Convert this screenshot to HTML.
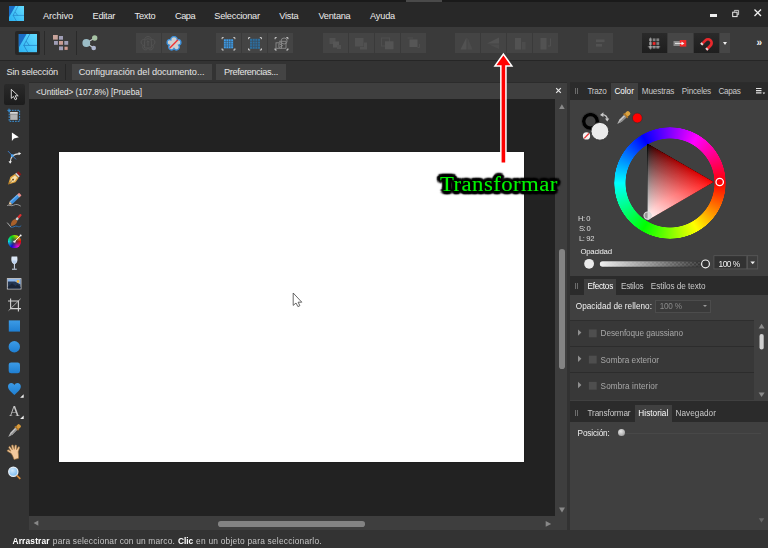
<!DOCTYPE html>
<html lang="es">
<head>
<meta charset="utf-8">
<title>Affinity Designer</title>
<style>
*{box-sizing:border-box;margin:0;padding:0}
html,body{width:768px;height:548px;overflow:hidden;background:#333}
body{position:relative;font-family:"Liberation Sans",sans-serif;font-size:9px;color:#e4e4e4;line-height:1}
.abs,.t{position:absolute}
.t{white-space:nowrap;line-height:12px;height:12px}
#topstrip{left:0;top:0;width:768px;height:2px;background:#1a1a1a}
#topseg{left:406px;top:0;width:36px;height:1.8px;background:#4a4a4a}
#menubar{left:0;top:2px;width:768px;height:24.5px;background:#282828}
#toolbar{left:0;top:26.5px;width:768px;height:34.5px;background:#3a3a3a;border-bottom:1px solid #262626}
#ctxbar{left:0;top:61px;width:768px;height:22px;background:#333}
#lefttools{left:0;top:83px;width:28.7px;height:447px;background:#333}
#doctab{left:29.2px;top:83px;width:538.1px;height:15.7px;background:#3f3f3f}
#canvas{left:28.7px;top:98.7px;width:526.3px;height:417.6px;background:#222}
#page{left:58.5px;top:152.3px;width:465.7px;height:310px;background:#fff;box-shadow:0 0 1.5px #141414}
#vscroll{left:555px;top:98.7px;width:13px;height:417px;background:#3e3e3e}
#hscroll{left:29px;top:516.3px;width:539px;height:13.7px;background:#3e3e3e}
#gap{left:567.3px;top:82px;width:2.7px;height:448px;background:#323232}
#rpanel{left:570px;top:83px;width:198px;height:447px;background:#404040}
#status{left:0;top:530px;width:768px;height:18px;background:#333}
.m{top:10.3px;font-size:9.2px;color:#ececec}
.tb{position:absolute;top:33px;height:20px;background:#444}
.tabrow{position:absolute;left:570px;width:198px;height:17px;background:#2b2b2b}
.tab{position:absolute;top:0;height:17px;background:#404040}
.st{top:534.5px;font-size:8.4px;color:#c6c6c6}
.pt{font-size:8.2px;color:#dcdcdc}
</style>
</head>
<body>
<div id="topstrip" class="abs"></div><div id="topseg" class="abs"></div>
<div id="menubar" class="abs"></div>
<div id="toolbar" class="abs"></div>
<div id="ctxbar" class="abs"></div>
<div class="abs" style="left:29px;top:81.6px;width:739px;height:1.4px;background:#2c2c2c"></div>
<div id="lefttools" class="abs"></div>
<div id="doctab" class="abs"></div>
<div id="canvas" class="abs"></div>
<div id="page" class="abs"></div>
<div id="vscroll" class="abs"></div>
<div id="hscroll" class="abs"></div>
<div id="gap" class="abs"></div>
<div id="rpanel" class="abs"></div>
<div id="status" class="abs"></div>

<!-- MENU -->
<span class="t m" style="left:43px;letter-spacing:-0.09px">Archivo</span>
<span class="t m" style="left:92.5px;letter-spacing:-0.22px">Editar</span>
<span class="t m" style="left:134.5px;letter-spacing:-0.19px">Texto</span>
<span class="t m" style="left:175px;letter-spacing:-0.49px">Capa</span>
<span class="t m" style="left:214.25px;letter-spacing:-0.22px">Seleccionar</span>
<span class="t m" style="left:279.25px;letter-spacing:-0.21px">Vista</span>
<span class="t m" style="left:318.5px;letter-spacing:-0.25px">Ventana</span>
<span class="t m" style="left:370px;letter-spacing:-0.18px">Ayuda</span>

<!-- CONTEXT BAR -->
<span class="t" style="left:6.5px;top:66px;font-size:9.2px;letter-spacing:-0.2px">Sin selección</span>


<!-- WINDOW CONTROLS -->
<div class="abs" style="left:710px;top:14.3px;width:7.2px;height:2.3px;background:#eee"></div>
<svg class="abs" style="left:730px;top:8px" width="12" height="12" viewBox="0 0 12 12"><path d="M4.4 3.6V2.4H8.6V6.6H7.4" fill="none" stroke="#d8d8d8" stroke-width="0.9"/><rect x="2.7" y="4.2" width="4.4" height="4.4" fill="none" stroke="#eee" stroke-width="1"/></svg>
<svg class="abs" style="left:752px;top:7px" width="12" height="12" viewBox="0 0 12 12"><path d="M2.5 2.5L9 9M9 2.5L2.5 9" stroke="#f0f0f0" stroke-width="1.3" fill="none"/></svg>

<!-- TOOLBAR BUTTONS -->
<div class="abs" style="left:15px;top:31px;width:25px;height:24px;background:#262626;border-radius:2px"></div>
<div class="abs" style="left:44px;top:31px;width:1px;height:24px;background:#2a2a2a"></div>
<div class="abs" style="left:76px;top:31px;width:1px;height:24px;background:#2a2a2a"></div>
<div class="tb" style="left:135.5px;width:25px"></div><div class="tb" style="left:161.5px;width:25px"></div>
<div class="tb" style="left:215.5px;width:25px"></div><div class="tb" style="left:241.5px;width:25px"></div><div class="tb" style="left:267.5px;width:25px"></div>
<div class="tb" style="left:322.5px;width:25px"></div><div class="tb" style="left:348.5px;width:25px"></div><div class="tb" style="left:374.5px;width:25px"></div><div class="tb" style="left:400.5px;width:25px"></div>
<div class="tb" style="left:454.5px;width:25px"></div><div class="tb" style="left:480.5px;width:25px"></div><div class="tb" style="left:506.5px;width:25px"></div><div class="tb" style="left:532.5px;width:25px"></div>
<div class="tb" style="left:587.5px;width:25px"></div>
<div class="tb" style="left:641.5px;width:25px;background:linear-gradient(#2a2a2a,#1e1e1e)"></div>
<div class="tb" style="left:667.5px;width:25px;background:#464646"></div>
<div class="tb" style="left:693.5px;width:25px;background:linear-gradient(#2a2a2a,#1e1e1e)"></div>
<div class="tb" style="left:720px;width:10px;background:#464646"></div>
<div class="abs" style="left:722.5px;top:41.5px;width:0;height:0;border-left:2.5px solid transparent;border-right:2.5px solid transparent;border-top:3px solid #eee"></div>
<span class="t" style="left:756.4px;top:36.6px;font-size:10px;color:#f4f4f4;font-weight:bold;letter-spacing:-0.3px">»</span>


<!-- TOOLBAR ICONS -->
<svg class="abs" style="left:0;top:0" width="768" height="62" viewBox="0 0 768 62">
<defs>
<linearGradient id="lg" x1="1" y1="0" x2="0" y2="1"><stop offset="0" stop-color="#62dbff"/><stop offset="1" stop-color="#2bb2f2"/></linearGradient>
<g id="logo"><rect width="15" height="15" fill="url(#lg)"/><path d="M0 0H6.4L0 11.2Z" fill="#1a6dc6"/><path d="M9.1 0L4.1 9.4L7.4 15M4.1 9.4H15M6.2 6L8.6 9.4" fill="none" stroke="#1767b3" stroke-width="0.55" opacity="0.85"/></g>
<g id="corners" fill="none" stroke="#e0e0e0" stroke-width="0.9"><path d="M-6.4 -4.6V-6.2H-4.8M4.8 -6.2H6.4V-4.6M6.4 4.6V6.2H4.8M-4.8 6.2H-6.4V4.6"/></g>
</defs>
<use href="#logo" x="9" y="6"/>
<g transform="translate(18.8,34) scale(1.213)"><use href="#logo"/></g>
<!-- pixel persona -->
<g>
<rect x="53" y="35" width="4.8" height="4.6" fill="#c9a49b"/><rect x="59" y="36" width="4" height="3.7" fill="#a09eb6"/>
<rect x="54" y="41" width="3.9" height="3.8" fill="#a09eb6"/><rect x="59" y="41" width="4" height="3.8" fill="#c99c94"/><rect x="64.3" y="41" width="3.9" height="3.8" fill="#a09eb6"/>
<rect x="59" y="46.4" width="4" height="3.8" fill="#a09eb6"/><rect x="64.5" y="46.7" width="3.2" height="3.2" fill="#d09a90"/>
</g>
<!-- share -->
<g><path d="M94.7 38L86.3 43L93.7 48" fill="none" stroke="#c4c8cc" stroke-width="1.1"/><circle cx="86.3" cy="43" r="3.9" fill="#9bbcc6"/><circle cx="94.7" cy="38" r="2.7" fill="#a7c3a4"/><circle cx="93.7" cy="48" r="2.3" fill="#aeb6d0"/></g>
<!-- flower disabled -->
<g transform="translate(148,43.4)" fill="none" stroke="#555" stroke-width="0.9">
<path id="fl" d="M0 -6.8C2.2 -6.8 3.4 -5.2 3.2 -3.6C4.9 -4.3 6.6 -3.4 6.9 -1.6C7.2 0.3 5.8 1.5 4.6 1.8C5.8 3.3 5.4 5.2 3.9 6.1C2.4 7 0.8 6.2 0 5C-0.8 6.2 -2.4 7 -3.9 6.1C-5.4 5.2 -5.8 3.3 -4.6 1.8C-5.8 1.5 -7.2 0.3 -6.9 -1.6C-6.6 -3.4 -4.9 -4.3 -3.2 -3.6C-3.4 -5.2 -2.2 -6.8 0 -6.8Z"/>
<path d="M-3.4 4.6V-1.5C-3.4 -3.5 -1.8 -4.6 0 -4.6C1.8 -4.6 3.4 -3.5 3.4 -1.5V4.6ZM0 2.5V-2.5M-1.4 -1.2L0 -2.6L1.4 -1.2"/>
</g>
<!-- flower active -->
<g transform="translate(174,43.4)"><use href="#fl" fill="#cfcfcf" stroke="#3a90dc" stroke-width="1.3"/><path d="M-4.2 4.6L4 -3.6" stroke="#f03030" stroke-width="1.3"/></g>
<!-- selection grids -->
<g transform="translate(228.5,43.8)"><rect x="-4.6" y="-4.5" width="9.2" height="9" fill="#3f9fec"/><path d="M-2.3 -4.5V4.5M0 -4.5V4.5M2.3 -4.5V4.5M-4.6 -2.2H4.6M-4.6 0H4.6M-4.6 2.2H4.6" stroke="#3a4a5a" stroke-width="0.7" opacity="0.8"/><use href="#corners"/></g>
<g transform="translate(255,43.8)"><rect x="-5" y="-5" width="10" height="10" fill="#2d6f9f"/><path d="M-2.5 -5V5M0 -5V5M2.5 -5V5M-5 -2.5H5M-5 0H5M-5 2.5H5" stroke="#3b4a58" stroke-width="0.8" opacity="0.8"/><use href="#corners"/></g>
<g transform="translate(281.5,43.8)"><g fill="none" stroke="#8a8a8a" stroke-width="0.9"><rect x="-5.5" y="-1" width="5.5" height="5.5"/><circle cx="2.6" cy="-2.8" r="3"/><path d="M-2.5 -2.5H4.5V4.5H-1M-2.6 -0.2L1.2 1.8L-2.6 3.8Z"/></g><use href="#corners"/></g>
<!-- boolean disabled -->
<g fill="#515151"><rect x="329.5" y="38" width="6" height="6"/><rect x="333" y="41.5" width="6" height="6" fill="#565656"/><rect x="337" y="45" width="4" height="4"/>
<rect x="355" y="38" width="8.5" height="8.5"/><path d="M364 42.5H367V49.5H360V47H364Z"/>
<rect x="381.5" y="38" width="8" height="8" fill="none" stroke="#4e4e4e"/><rect x="385" y="41.3" width="8.5" height="8" fill="#545454"/>
<rect x="409.5" y="39.5" width="8" height="7.5" fill="#565656"/><path d="M407.5 38H413M417.5 47.5H419.5V44" stroke="#4e4e4e" fill="none"/></g>
<!-- flips disabled -->
<g fill="#525252"><path d="M466.5 37.5V49.5H460.5Z"/><path d="M467.5 37.5V49.5H472.5Z" fill="#4c4c4c"/>
<path d="M499 37.5L487 43.5H499Z"/><path d="M499 44.5L489 44.5L499 49Z" fill="#4c4c4c"/>
<rect x="515" y="38" width="6" height="11.5"/><rect x="522" y="42" width="3.5" height="7.5" fill="#4c4c4c"/>
<rect x="540.5" y="38" width="6" height="11.5"/><path d="M550.5 38.5V46H548" stroke="#505050" fill="none"/>
<rect x="596" y="39.5" width="8.5" height="2.6"/><rect x="596" y="44" width="6" height="2.6"/></g>
<!-- snapping grid -->
<g fill="#808080"><rect x="649" y="38.4" width="2.8" height="2.8"/><rect x="652.7" y="38.4" width="2.8" height="2.8"/><rect x="656.4" y="38.4" width="2.8" height="2.8"/>
<rect x="649" y="42.1" width="2.8" height="2.8"/><rect x="652.7" y="42.1" width="2.8" height="2.8" fill="#f02828"/><rect x="656.4" y="42.1" width="2.8" height="2.8"/>
<rect x="649" y="45.8" width="2.8" height="2.8"/><rect x="652.7" y="45.8" width="2.8" height="2.8"/><rect x="656.4" y="45.8" width="2.8" height="2.8"/>
<path d="M650.6 37.5V49.5M647.8 46.8H660.2" stroke="#bdbdbd" stroke-width="0.6" fill="none"/></g>
<!-- force pixel alignment -->
<g><rect x="673.5" y="41" width="6.5" height="5" fill="#8a8a8a"/><rect x="679.8" y="40" width="6.5" height="6.6" fill="#f02828"/><path d="M675 43.4H682" stroke="#f2f2f2" stroke-width="0.9"/><path d="M681.5 41.5L684.4 43.4L681.5 45.3Z" fill="#f4f4f4"/></g>
<!-- magnet -->
<g transform="translate(707.3,43.6) rotate(45)"><path d="M-3.6 5V-1A3.6 3.6 0 0 1 3.6 -1V5" fill="none" stroke="#e8282c" stroke-width="2.7"/><path d="M-3.6 5V3.2M3.6 5V3.2" stroke="#dcdcdc" stroke-width="2.7"/></g>
</svg>

<!-- CONTEXT BAR BUTTONS -->
<div class="abs" style="left:65px;top:64px;width:1px;height:16px;background:#262626"></div>
<div class="abs" style="left:71.5px;top:64px;width:140.5px;height:15.5px;background:#444"></div>
<div class="abs" style="left:216px;top:64px;width:70px;height:15.5px;background:#444"></div>
<span class="t" style="left:78.75px;top:66px;font-size:9.2px;letter-spacing:-0.05px">Configuración del documento...</span>
<span class="t" style="left:224px;top:66px;font-size:9.2px;letter-spacing:-0.36px">Preferencias...</span>

<!-- DOC TAB -->
<span class="t" style="left:36px;top:87px;font-size:8.2px;color:#e8e8e8">&lt;Untitled&gt; (107.8%) [Prueba]</span>
<svg class="abs" style="left:554px;top:86.2px" width="9" height="9" viewBox="0 0 9 9"><path d="M2.2 2.2L6.8 6.8M6.8 2.2L2.2 6.8" stroke="#e8e8e8" stroke-width="1.2" fill="none"/></svg>


<!-- LEFT TOOLS -->
<div class="abs" style="left:4px;top:84px;width:21px;height:20.5px;background:linear-gradient(#2a2a2a,#1c1c1c);border-radius:2px"></div>
<div class="abs" style="left:8.2px;top:235.4px;width:12.6px;height:12.6px;border-radius:50%;background:radial-gradient(circle,#3a3a3a 0,rgba(60,60,60,0.7) 25%,rgba(60,60,60,0) 75%),conic-gradient(from 90deg,#f00,#f0f,#00f,#0ff,#0f0,#ff0,#f00)"></div>
<svg class="abs" style="left:0;top:83px" width="29" height="447" viewBox="0 83 29 447">
<defs>
<radialGradient id="lens" cx="0.4" cy="0.35" r="0.7"><stop offset="0" stop-color="#d4eafc"/><stop offset="1" stop-color="#74b8f0"/></radialGradient>
<linearGradient id="bl" x1="0" y1="0" x2="0" y2="1"><stop offset="0" stop-color="#3c9be6"/><stop offset="1" stop-color="#1f7fd2"/></linearGradient>
</defs>
<!-- pointer -->
<path d="M11.3 89.3V98.4L13.5 96.4L15.2 99.8L16.8 99L15.2 95.8H18.2Z" fill="#1c1c1c" stroke="#e6e6e6" stroke-width="0.9" stroke-linejoin="round"/>
<!-- artboard -->
<rect x="9.2" y="110.3" width="10.4" height="11" fill="none" stroke="#3a96e0" stroke-width="1" stroke-dasharray="1.7 1"/>
<rect x="10.2" y="112.1" width="7.4" height="7.8" fill="#b4b4b4"/><rect x="10.2" y="112.1" width="7.4" height="1.7" fill="#dedede"/><rect x="10.2" y="113.8" width="7.4" height="0.6" fill="#777"/>
<path d="M9 108.6V112M7.3 110.3H10.7" stroke="#3a96e0" stroke-width="0.9"/>
<!-- node -->
<path d="M11.9 132.6V140.9L14 138.6L18.9 137.2Z" fill="#fff"/>
<!-- corner -->
<path d="M10.2 162.6C10.2 157.6 12.8 153.8 19.6 153.6" fill="none" stroke="#dcdcdc" stroke-width="1.1"/><path d="M18.6 151.9L21.2 153.6L18.6 155.3Z M8.5 161.2L10.2 163.8L11.9 161.2Z" fill="#ececec"/><path d="M7.9 151L16 159.4" stroke="#3a7fd0" stroke-width="0.9"/><rect x="10.9" y="154.3" width="2.6" height="2.6" fill="#4aa0ec"/>
<!-- pen -->
<g transform="translate(14.2,178.4) rotate(45)"><path d="M-2.2 -8H2.2V-5.2H-2.2Z" fill="#8a1a1a"/><path d="M-2.5 -5.4H2.5V-3.6H-2.5Z" fill="#cfcfcf"/><path d="M-2.7 -3.6H2.7L3.7 1.8L0 8.6L-3.7 1.8Z" fill="#e2a43c"/><path d="M-1.5 -2.6H1.5L2.3 1.6L0 6L-2.3 1.6Z" fill="#f6e2b0"/><path d="M0 8.4V2.4" stroke="#6a4210" stroke-width="0.7"/><circle cx="0" cy="1.6" r="0.9" fill="#6a4210"/></g>
<!-- pencil -->
<g transform="translate(14.5,199.5) rotate(47)"><rect x="-1.8" y="-8" width="3.6" height="2.2" rx="0.6" fill="#ec8c8c"/><rect x="-1.8" y="-5.8" width="3.6" height="1.1" fill="#d4d4d4"/><rect x="-1.8" y="-4.7" width="3.6" height="9.6" fill="#3a8fe0"/><rect x="-1.8" y="-4.7" width="1.2" height="9.6" fill="#6ab0f0"/><path d="M-1.8 4.9H1.8L0 8.2Z" fill="#e8c9a0"/><path d="M-0.7 7H0.7L0 8.4Z" fill="#333"/></g>
<path d="M7.2 205.6C9.5 204.2 11 206.8 13.6 205.2C16 203.8 18.2 204.4 20.8 206.2" fill="none" stroke="#b0b0b0" stroke-width="0.8"/>
<!-- brush -->
<g transform="translate(15.2,221) rotate(42)"><rect x="-1.1" y="-9" width="2.2" height="5" rx="1" fill="#e03030"/><rect x="-1.2" y="-4.2" width="2.4" height="2.8" fill="#cfcfcf"/><path d="M-1.6 -1.4H1.6C3 1 2.8 4 0 6.6C-2.8 4 -3 1 -1.6 -1.4Z" fill="#a8602a"/></g>
<path d="M7.2 222.6L11 227.2" stroke="#c8c8c8" stroke-width="0.8"/><path d="M10.6 227C13 228.4 15 225 17.5 226.4C19 227.2 20 226.8 21.2 225.6" fill="none" stroke="#2f6fb0" stroke-width="1"/>
<!-- fill tool colour wheel -->
<path d="M14.6 241.5L20.4 235.7" stroke="#f4f4f4" stroke-width="1"/><circle cx="14.5" cy="241.6" r="1.2" fill="#f0f0f0"/><circle cx="20.6" cy="235.6" r="1" fill="#fff"/>
<!-- transparency glass -->
<path d="M11.6 256.6H17.2C17.8 260 17.6 263.2 14.4 264.2C11.2 263.2 11 260 11.6 256.6Z" fill="#dbe7f6"/><path d="M12.2 260.5H16.8C16.6 262.4 15.8 263.4 14.4 263.8C13 263.4 12.4 262.4 12.2 260.5Z" fill="#b9cfec"/><path d="M14.4 264V268.8M12 269.2H16.8" stroke="#cfdcf0" stroke-width="1"/>
<!-- image -->
<rect x="7.3" y="278.6" width="13.7" height="10.4" fill="#253752" stroke="#dcdcdc" stroke-width="0.8"/><path d="M7.8 281.5H15L20.5 284.6V279H7.8Z" fill="#8fb6e8"/><path d="M7.8 287L12 283.2L15.5 286L17.5 284.6L20.6 287V288.6H7.8Z" fill="#1b2536"/><circle cx="18" cy="281.4" r="1.3" fill="#f2b33a"/>
<!-- crop -->
<path d="M10.6 298.4V308.6H21M8 301H18.4V311.4" fill="none" stroke="#d2d2d2" stroke-width="1.1"/><path d="M8.6 310.6L20.6 298.8" stroke="#c4c4c4" stroke-width="0.8"/>
<!-- shapes -->
<rect x="8.8" y="320.4" width="11.2" height="11.2" fill="url(#bl)"/>
<circle cx="14.3" cy="346.7" r="5.7" fill="url(#bl)"/>
<rect x="8.7" y="362.4" width="11.3" height="10.9" rx="2.4" fill="url(#bl)"/>
<path d="M14.4 394.9C10.5 391.5 8 389.4 8 386.5C8 384.5 9.5 383 11.3 383C12.6 383 13.8 383.8 14.4 385C15 383.8 16.2 383 17.5 383C19.3 383 20.8 384.5 20.8 386.5C20.8 389.4 18.3 391.5 14.4 394.9Z" fill="url(#bl)"/>
<path d="M23.7 394.2V397.8H20.1Z M23.7 415.5V419.1H20.1Z" fill="#f0f0f0"/>
<!-- dropper -->
<g transform="translate(14.4,430.6) rotate(45)"><rect x="-2" y="-8" width="4" height="4.2" rx="1.2" fill="#d89a3a"/><rect x="-2.6" y="-4" width="5.2" height="1.5" fill="#b87a28"/><path d="M-1.4 -2.5H1.4V4L0 8.6L-1.4 4Z" fill="#c8c8c8"/><path d="M0 -2.5H1.4V4L0 8.6Z" fill="#909090"/></g>
<!-- hand -->
<g transform="rotate(-14 14.4 452.6)"><path d="M11 452.5L8.2 449.8C7.4 448.9 8.6 447.9 9.5 448.7L11.4 450.4L10.2 446.6C9.9 445.5 11.4 445 11.8 446.1L13.1 449.4L13.3 445.4C13.4 444.3 15 444.4 15 445.5L15.1 449.4L16.6 446C17.1 445 18.5 445.6 18.1 446.7L17.1 450.4L19.3 448.2C20.1 447.4 21.1 448.4 20.4 449.3L18.2 452.8C17.8 455.6 17.6 457.2 17 459.2H12.4C12.2 456.6 11.9 454.4 11 452.5Z" fill="#f2c89c" stroke="#a87840" stroke-width="0.55"/></g>
<!-- zoom -->
<circle cx="13.3" cy="471.7" r="4.6" fill="url(#lens)" stroke="#e8f0f8" stroke-width="1.3"/><path d="M16.8 475.3L20.3 478.9" stroke="#d88a3a" stroke-width="1.7"/>
</svg>
<span class="t" style="left:9px;top:402px;font-family:'Liberation Serif',serif;font-size:15px;line-height:18px;height:18px;color:#c6c6c6;will-change:transform">A</span>


<!-- SCROLLBARS -->
<div class="abs" style="left:559px;top:248.6px;width:5.6px;height:120.4px;background:#838383;border-radius:2.8px"></div>
<div class="abs" style="left:217.6px;top:521px;width:147.2px;height:5.6px;background:#838383;border-radius:2.8px"></div>
<svg class="abs" style="left:0;top:0;pointer-events:none" width="768" height="548" viewBox="0 0 768 548">
<path d="M559.1 108.9L561.9 104.2L564.7 108.9Z" fill="#888"/>
<path d="M559 507.6L562 512.6L565 507.6Z" fill="#888"/>
<path d="M38.3 520.4L33.6 523.1L38.3 525.8Z" fill="#888"/>
<path d="M545.7 521L551.2 523.9L545.7 526.8Z" fill="#888"/>
<path d="M758.8 518.2L761.5 522.6L764.2 518.2Z" fill="#666"/>
</svg>

<!-- RIGHT PANEL: COLOR -->
<div class="tabrow" style="top:83px"><div class="tab" style="left:40.5px;width:27px"></div></div>
<span class="t pt" style="left:587.5px;top:85.5px;color:#c9c9c9;letter-spacing:-0.36px">Trazo</span>
<span class="t pt" style="left:614.4px;top:85.5px;color:#fff;letter-spacing:-0.02px">Color</span>
<span class="t pt" style="left:641.7px;top:85.5px;color:#c9c9c9;letter-spacing:-0.13px">Muestras</span>
<span class="t pt" style="left:681.8px;top:85.5px;color:#c9c9c9;letter-spacing:-0.22px">Pinceles</span>
<span class="t pt" style="left:718.5px;top:85.5px;color:#c9c9c9;letter-spacing:-0.35px">Capas</span>
<svg class="abs" style="left:755px;top:87px" width="12" height="9" viewBox="0 0 12 9"><path d="M1 1.5H6.5M1 3.7H6.5M1 5.9H6.5" stroke="#e4e4e4" stroke-width="1.2"/><path d="M7.6 5.4H10.2L8.9 7.2Z" fill="#e4e4e4"/></svg>

<div class="abs" style="left:613.6px;top:126.8px;width:112px;height:112px;border-radius:50%;background:conic-gradient(from 90deg,#f00,#ff0,#0f0,#0ff,#00f,#f0f,#f00);-webkit-mask:radial-gradient(circle,transparent 44.2px,#000 44.8px,#000 55.4px,transparent 56px);mask:radial-gradient(circle,transparent 44.2px,#000 44.8px,#000 55.4px,transparent 56px)"></div>
<svg class="abs" style="left:570px;top:100px" width="198" height="180" viewBox="570 100 198 180">
<defs>
<linearGradient id="tw" gradientUnits="userSpaceOnUse" x1="647.5" y1="220.2" x2="680.6" y2="162.9"><stop offset="0" stop-color="rgb(255,255,255)"/><stop offset="0.1" stop-color="rgb(228,228,228)"/><stop offset="0.25" stop-color="rgb(187,187,187)"/><stop offset="0.5" stop-color="rgb(121,121,121)"/><stop offset="0.75" stop-color="rgb(57,57,57)"/><stop offset="1" stop-color="rgb(0,0,0)"/></linearGradient>
<linearGradient id="tr" gradientUnits="userSpaceOnUse" x1="647.5" y1="182" x2="713.7" y2="182"><stop offset="0" stop-color="rgb(0,0,0)"/><stop offset="0.05" stop-color="rgb(36,0,0)"/><stop offset="0.1" stop-color="rgb(57,0,0)"/><stop offset="0.2" stop-color="rgb(90,0,0)"/><stop offset="0.3" stop-color="rgb(117,0,0)"/><stop offset="0.45" stop-color="rgb(152,0,0)"/><stop offset="0.6" stop-color="rgb(183,0,0)"/><stop offset="0.8" stop-color="rgb(221,0,0)"/><stop offset="1" stop-color="rgb(255,0,0)"/></linearGradient>
<filter id="gam" x="-5%" y="-5%" width="110%" height="110%" color-interpolation-filters="sRGB"><feComponentTransfer><feFuncR type="gamma" exponent="0.82"/><feFuncG type="gamma" exponent="0.82"/><feFuncB type="gamma" exponent="0.82"/></feComponentTransfer></filter>
<linearGradient id="op" x1="0" y1="0" x2="1" y2="0"><stop offset="0" stop-color="#f0f0f0"/><stop offset="0.5" stop-color="#e0e0e0" stop-opacity="0.55"/><stop offset="1" stop-color="#ddd" stop-opacity="0"/></linearGradient>
<pattern id="chk" width="4" height="4" patternUnits="userSpaceOnUse" x="600" y="261.5"><rect width="4" height="4" fill="#484848"/><rect width="2" height="2" fill="#2c2c2c"/><rect x="2" y="2" width="2" height="2" fill="#2c2c2c"/></pattern>
</defs>
<!-- stroke/fill selector -->
<circle cx="590.5" cy="121.3" r="6.85" fill="none" stroke="#000" stroke-width="3.5"/>
<circle cx="590.5" cy="121.3" r="9" fill="none" stroke="#343434" stroke-width="0.8"/>
<circle cx="599.9" cy="131.3" r="8.9" fill="#ebebeb" stroke="#353535" stroke-width="0.9"/>
<circle cx="586.5" cy="135.9" r="3.65" fill="#f4f4f4"/><path d="M584.2 138.4L588.9 133.5" stroke="#ee3030" stroke-width="1.3"/>
<path d="M602 114.6C605.4 114.4 607.4 116.8 607.2 119.4" fill="none" stroke="#cacaca" stroke-width="1.3"/><path d="M600 114.9L603.4 112.2V117Z M607.2 121.6L605 118.4H609.3Z" fill="#cacaca"/>
<g transform="translate(623.4,117.9) rotate(46) scale(1.08)"><rect x="-2.1" y="-7.8" width="4.2" height="4.4" rx="1.5" fill="#dba23e"/><rect x="-2.7" y="-3.8" width="5.4" height="1.6" rx="0.5" fill="#b87c28"/><path d="M-1.5 -2.2H1.5V3.6L0 7.8L-1.5 3.6Z" fill="#c8c8c8"/><path d="M0 -2.2H1.5V3.6L0 7.8Z" fill="#8a8a8a"/></g>
<circle cx="637.3" cy="118" r="4.9" fill="#f00" stroke="#2e2e2e" stroke-width="0.6"/>
<!-- wheel -->
<g style="isolation:isolate" filter="url(#gam)"><path d="M713.7 182L647.5 143.8V220.2Z" fill="url(#tr)"/><path d="M713.7 182L647.5 143.8V220.2Z" fill="url(#tw)" style="mix-blend-mode:plus-lighter"/></g>
<circle cx="719.7" cy="182" r="3.7" fill="none" stroke="#fff" stroke-width="1.3"/>
<circle cx="647.6" cy="215.6" r="3.6" fill="#d0d0d0" fill-opacity="0.6" stroke="#d8d8d8" stroke-width="1.2"/>
<!-- opacity -->
<circle cx="589.1" cy="263.8" r="4.9" fill="#ebebeb"/>
<rect x="599.8" y="261.3" width="103" height="5.4" rx="2.7" fill="url(#chk)" stroke="#2a2a2a" stroke-width="0.6"/>
<rect x="599.8" y="261.3" width="103" height="5.4" rx="2.7" fill="url(#op)"/>
<circle cx="705.5" cy="263.9" r="3.9" fill="#303030" stroke="#f2f2f2" stroke-width="1.2"/>
<rect x="713.9" y="255.7" width="33" height="13.2" fill="#323232" stroke="#5a5a5a" stroke-width="0.8"/>
<rect x="747.3" y="255.7" width="10.4" height="13.2" fill="#3c3c3c" stroke="#5a5a5a" stroke-width="0.8"/>
<path d="M750.4 261.6H755L752.7 264.3Z" fill="#eee"/>
</svg>
<span class="t pt" style="left:577.9px;top:213.1px;font-size:7.6px;letter-spacing:-0.43px">H: 0</span>
<span class="t pt" style="left:579px;top:223px;font-size:7.6px;letter-spacing:-0.6px">S: 0</span>
<span class="t pt" style="left:579px;top:233px;font-size:7.6px;letter-spacing:-0.38px">L: 92</span>
<span class="t pt" style="left:580.5px;top:245.6px;font-size:7.8px;color:#f0f0f0;letter-spacing:-0.27px">Opacidad</span>
<span class="t pt" style="left:718.5px;top:257.8px;font-size:8.4px;color:#f2f2f2;letter-spacing:-0.5px">100 %</span>

<!-- RIGHT PANEL: EFFECTS -->
<div class="tabrow" style="top:278px"><div class="tab" style="left:13.5px;width:32.5px"></div></div>
<span class="t pt" style="left:587.5px;top:281px;color:#fff;letter-spacing:-0.26px">Efectos</span>
<span class="t pt" style="left:620.9px;top:281px;color:#c9c9c9;letter-spacing:-0.22px">Estilos</span>
<span class="t pt" style="left:650.8px;top:281px;color:#c9c9c9;letter-spacing:-0.05px">Estilos de texto</span>
<span class="t pt" style="left:575.8px;top:301px;color:#f0f0f0;letter-spacing:0.03px">Opacidad de relleno:</span>
<div class="abs" style="left:654.5px;top:299.5px;width:56px;height:13px;background:#3a3a3a;border:1px solid #4c4c4c"></div>
<span class="t pt" style="left:659.7px;top:301px;color:#8a8a8a;letter-spacing:-0.22px">100 %</span>
<div class="abs" style="left:703px;top:304.5px;width:0;height:0;border-left:2px solid transparent;border-right:2px solid transparent;border-top:2.5px solid #999"></div>
<div class="abs" style="left:570px;top:319.5px;width:184px;height:80px;background:#383838;border-top:1px solid #2e2e2e"></div>
<div class="abs" style="left:570px;top:346px;width:184px;height:1px;background:#2c2c2c"></div>
<div class="abs" style="left:570px;top:372px;width:184px;height:1px;background:#2c2c2c"></div>
<div class="abs" style="left:570px;top:401px;width:198px;height:4px;background:#2b2b2b"></div>
<div class="abs" style="left:570px;top:275.5px;width:198px;height:3px;background:#2b2b2b"></div>
<svg class="abs" style="left:570px;top:319px" width="198" height="82" viewBox="570 319 198 82">
<g fill="#909090"><path d="M578 329.4V335.8L581.4 332.6Z"/><path d="M578 355.6V362L581.4 358.8Z"/><path d="M578 381.8V388.2L581.4 385Z"/></g>
<g fill="#4e4e4e"><rect x="588.9" y="329.5" width="7.8" height="7.8"/><rect x="588.9" y="355.7" width="7.8" height="7.8"/><rect x="588.9" y="381.9" width="7.8" height="7.8"/></g>
<path d="M758.6 328.4L761.6 323.8L764.6 328.4Z" fill="#8a8a8a"/>
<path d="M758.6 392.4L761.6 397L764.6 392.4Z" fill="#8a8a8a"/>
<rect x="759.5" y="334" width="4.2" height="15.5" rx="2.1" fill="#d0d0d0"/>
</svg>
<span class="t pt" style="left:600.6px;top:327.5px;color:#a8a8a8;letter-spacing:-0.07px">Desenfoque gaussiano</span>
<span class="t pt" style="left:600.6px;top:355px;color:#a8a8a8;letter-spacing:0.01px">Sombra exterior</span>
<span class="t pt" style="left:600.6px;top:381px;color:#a8a8a8;letter-spacing:0.08px">Sombra interior</span>

<!-- RIGHT PANEL: HISTORY -->
<div class="tabrow" style="top:405px"><div class="tab" style="left:65px;width:37px"></div></div>
<span class="t pt" style="left:587.5px;top:408px;color:#c9c9c9;letter-spacing:-0.12px">Transformar</span>
<span class="t pt" style="left:638.3px;top:408px;color:#fff;letter-spacing:0.05px">Historial</span>
<span class="t pt" style="left:675.5px;top:408px;color:#c9c9c9;letter-spacing:0.05px">Navegador</span>
<span class="t pt" style="left:577.6px;top:428px;color:#f0f0f0;letter-spacing:-0.13px">Posición:</span>
<div class="abs" style="left:621px;top:432.5px;width:140px;height:1px;background:#484848"></div>
<div class="abs" style="left:617.5px;top:429.3px;width:7px;height:7px;border-radius:50%;background:radial-gradient(circle at 40% 35%,#e8e8e8,#8c8c8c)"></div>


<!-- GRIPS -->
<div class="abs" style="left:575px;top:88.1px;width:0.9px;height:5.6px;background:#6c6c6c"></div><div class="abs" style="left:577.2px;top:88.1px;width:0.9px;height:5.6px;background:#6c6c6c"></div><div class="abs" style="left:575px;top:283.3px;width:0.9px;height:5.6px;background:#6c6c6c"></div><div class="abs" style="left:577.2px;top:283.3px;width:0.9px;height:5.6px;background:#6c6c6c"></div><div class="abs" style="left:575px;top:410.2px;width:0.9px;height:5.6px;background:#6c6c6c"></div><div class="abs" style="left:577.2px;top:410.2px;width:0.9px;height:5.6px;background:#6c6c6c"></div>
<!-- ANNOTATION -->
<svg class="abs" style="left:0;top:0;pointer-events:none" width="768" height="548" viewBox="0 0 768 548">
<path d="M503.4 55.4L510.4 65.2H505.2V162.6H501.6V65.2H496.4Z" fill="#f00" stroke="#fff" stroke-width="3" stroke-linejoin="miter" stroke-miterlimit="6" paint-order="stroke"/>

<path d="M293.2 293V305.4L296 303L297.9 306.6L299.9 305.7L298.1 302.2H301.8Z" fill="#fff" stroke="#444" stroke-width="0.8" stroke-linejoin="round"/>
</svg>
<span class="t" id="anno" style="left:440px;top:170px;height:28px;line-height:28px;font-family:'Liberation Serif',serif;font-size:20.5px;color:#00f400;transform-origin:0 50%;transform:scaleX(1.11);letter-spacing:0.4px;text-shadow:1.5px 0.0px 1px #000,1.3px 0.7px 1px #000,0.8px 1.3px 1px #000,0.0px 1.5px 1px #000,-0.7px 1.3px 1px #000,-1.3px 0.7px 1px #000,-1.5px 0.0px 1px #000,-1.3px -0.7px 1px #000,-0.8px -1.3px 1px #000,-0.0px -1.5px 1px #000,0.8px -1.3px 1px #000,1.3px -0.8px 1px #000,2.5px 0.0px 1.2px #000,2.2px 1.2px 1.2px #000,1.3px 2.2px 1.2px #000,0.0px 2.5px 1.2px #000,-1.2px 2.2px 1.2px #000,-2.2px 1.2px 1.2px #000,-2.5px 0.0px 1.2px #000,-2.2px -1.2px 1.2px #000,-1.3px -2.2px 1.2px #000,-0.0px -2.5px 1.2px #000,1.3px -2.2px 1.2px #000,2.2px -1.3px 1.2px #000,3.0px 0.0px 1.5px #000,2.6px 1.5px 1.5px #000,1.5px 2.6px 1.5px #000,0.0px 3.0px 1.5px #000,-1.5px 2.6px 1.5px #000,-2.6px 1.5px 1.5px #000,-3.0px 0.0px 1.5px #000,-2.6px -1.5px 1.5px #000,-1.5px -2.6px 1.5px #000,-0.0px -3.0px 1.5px #000,1.5px -2.6px 1.5px #000,2.6px -1.5px 1.5px #000;-webkit-text-stroke:0.12px #00f400">Transformar</span>

<!-- STATUS -->
<span class="t st" style="left:12.5px;font-weight:bold;color:#fff;letter-spacing:0.15px">Arrastrar</span>
<span class="t st" style="left:52.8px;letter-spacing:0.18px">para seleccionar con un marco.</span>
<span class="t st" style="left:178px;font-weight:bold;color:#fff;letter-spacing:-0.09px">Clic</span>
<span class="t st" style="left:196.1px;letter-spacing:0.22px">en un objeto para seleccionarlo.</span>

</body>
</html>
